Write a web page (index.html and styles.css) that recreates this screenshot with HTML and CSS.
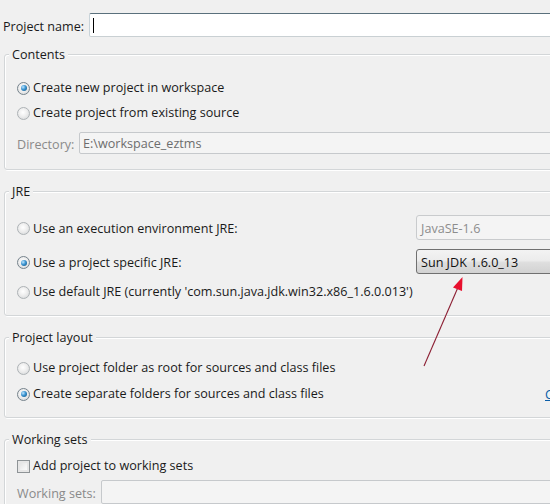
FILE: index.html
```html
<!DOCTYPE html>
<html>
<head>
<meta charset="utf-8">
<link rel="stylesheet" href="styles.css">
</head>
<body>
<div class="page">
  <div class="name-row">
    <span class="name-label">Project name:</span>
    <div class="textbox focused"><span class="caret"></span></div>
  </div>

  <fieldset class="group g-contents">
    <legend>Contents</legend>
    <div class="opt r1"><span class="radio on"></span>Create new project in workspace</div>
    <div class="opt"><span class="radio"></span>Create project from existing source</div>
    <div class="field-row dir-row">
      <span class="field-label dir-label">Directory:</span>
      <div class="textbox disabled">E:\workspace_eztms</div>
    </div>
  </fieldset>

  <fieldset class="group g-jre">
    <legend>JRE</legend>
    <div class="jre-grid">
      <div class="opt"><span class="radio"></span>Use an execution environment JRE:</div>
      <div class="combo disabled">JavaSE-1.6</div>
      <div class="opt"><span class="radio on"></span>Use a project specific JRE:</div>
      <div class="combo active">Sun JDK 1.6.0_13</div>
      <div class="opt wide"><span class="radio"></span>Use default JRE (currently 'com.sun.java.jdk.win32.x86_1.6.0.013')</div>
    </div>
  </fieldset>

  <fieldset class="group g-layout">
    <legend>Project layout</legend>
    <div class="opt"><span class="radio"></span>Use project folder as root for sources and class files</div>
    <div class="layout-row">
      <div class="opt"><span class="radio on"></span>Create separate folders for sources and class files</div>
      <a class="link">Configure default...</a>
    </div>
  </fieldset>

  <fieldset class="group g-ws">
    <legend>Working sets</legend>
    <div class="opt"><span class="check"></span>Add project to working sets</div>
    <div class="field-row ws-row">
      <span class="field-label ws-label">Working sets:</span>
      <div class="textbox disabled"></div>
    </div>
  </fieldset>

  <svg class="arrow" width="550" height="504" viewBox="0 0 550 504">
    <line x1="424" y1="366" x2="459" y2="285" stroke="#8c1f33" stroke-width="1.1"/>
    <polygon points="462.5,277 453,287.5 462,291" fill="#e8102e"/>
  </svg>
</div>
</body>
</html>
```

FILE: styles.css
```css
html, body {
  margin: 0;
  padding: 0;
  background: #f0f0f0;
}
body {
  width: 550px;
  height: 504px;
  overflow: hidden;
  font-family: "Open Sans", "Noto Sans", sans-serif;
  font-size: 12.6px;
  color: #1a1a1a;
}
.page {
  position: relative;
  width: 550px;
  height: 504px;
  overflow: hidden;
}
.name-row {
  display: flex;
  align-items: center;
  padding: 13px 0 0 3px;
  height: 24px;
}
.name-label {
  width: 86px;
  flex: none;
  padding-top: 3px;
  white-space: nowrap;
}
.textbox {
  box-sizing: border-box;
  flex: 1;
  height: 24px;
  margin-right: -20px;
  background: #fff;
  border: 1px solid #b9c3c9;
  border-radius: 2px;
  display: flex;
  align-items: center;
  padding-left: 3px;
  white-space: nowrap;
}
.textbox.focused {
  border-top-color: #5a707c;
  border-left-color: #c8d3d9;
  border-bottom-color: #c9d0d3;
}
.caret {
  display: block;
  width: 1px;
  height: 15px;
  background: #000;
}
.textbox.disabled {
  background: #f4f4f4;
  border-color: #c6c9cc;
  color: #6d6d6d;
  height: 22px;
  padding-top: 1px;
}

.group {
  margin: 13px -40px 0 4px;
  padding: 0 0 0 12px;
  border: 1px solid #d3d6d8;
  border-radius: 3px;
  box-shadow: inset 1px 1px 0 #fff, 1px 1px 0 #fff;
  min-width: 0;
}
.g-contents { margin-top: 9px; padding-bottom: 15px; }
.group legend {
  padding: 1px 3px 0;
  margin-left: -8px;
  line-height: 16px;
  height: 16px;
  box-sizing: border-box;
  background: #f0f0f0;
}
.opt {
  box-sizing: border-box;
  display: flex;
  align-items: center;
  height: 24px;
  padding-top: 2px;
  line-height: 20px;
  white-space: nowrap;
}
.radio {
  box-sizing: border-box;
  flex: none;
  width: 13px;
  height: 13px;
  margin-right: 3px;
  border-radius: 50%;
  border: 1px solid #adb2b5;
  background: radial-gradient(circle at 45% 40%, #ffffff 0%, #eeeeee 45%, #d0d3d5 100%);
  position: relative;
}
.radio.on {
  border-color: #76838c;
}
.radio.on::after {
  content: "";
  position: absolute;
  left: 2.5px;
  top: 2.5px;
  width: 6px;
  height: 6px;
  border-radius: 50%;
  background: radial-gradient(circle at 35% 35%, #bfe6ff 0%, #3a93d0 45%, #0f4d78 100%);
}
.check {
  box-sizing: border-box;
  flex: none;
  width: 13px;
  height: 13px;
  margin-right: 3px;
  border: 1px solid #8e9396;
  background: linear-gradient(135deg, #dcdcdc 0%, #f4f4f4 60%, #ffffff 100%);
  box-shadow: inset 0 0 0 2px #e6e6e6;
}

.g-contents .r1 { margin-top: 13px; }
.g-contents .opt + .opt { margin-top: 1px; }
.field-row {
  display: flex;
  align-items: center;
}
.field-label {
  flex: none;
  color: #8a8a8a;
  white-space: nowrap;
  padding-top: 2px;
}
.dir-row { margin-top: 8px; }
.dir-label { width: 62px; }

.g-jre { padding-bottom: 12px; }
.jre-grid {
  display: grid;
  grid-template-columns: 399px 1fr;
  align-items: center;
  margin-top: 16px;
}
.jre-grid .opt.wide { grid-column: 1 / 3; margin-top: 5px; }
.combo {
  box-sizing: border-box;
  height: 25px;
  border-radius: 3px;
  padding: 1px 0 0 4px;
  display: flex;
  align-items: center;
  white-space: nowrap;
}
.combo.disabled {
  border: 1px solid #c9cbcd;
  background: #f4f4f4;
  color: #8d8d8d;
}
.combo.active {
  margin-top: 9px;
  border: 1px solid #707070;
  background: linear-gradient(#f3f3f3 0%, #ececec 45%, #dedede 55%, #d2d2d2 100%);
  color: #111;
}
.jre-grid .opt:nth-child(3) { margin-top: 9px; height: 25px; }

.g-layout { padding-bottom: 12px; }
.g-layout > .opt { margin-top: 10px; }
.layout-row {
  display: grid;
  grid-template-columns: 528px auto;
  align-items: center;
  margin-top: 2px;
}
.link {
  color: #0a5ea8;
  text-decoration: underline;
  white-space: nowrap;
  padding-top: 2px;
}

.g-ws { padding-bottom: 20px; }
.g-ws > .opt { margin-top: 6px; }
.ws-row { margin-top: 3px; }
.ws-label { width: 84px; }
.ws-row .textbox { height: 24px; }

.arrow {
  position: absolute;
  left: 0;
  top: 0;
  pointer-events: none;
}
```
